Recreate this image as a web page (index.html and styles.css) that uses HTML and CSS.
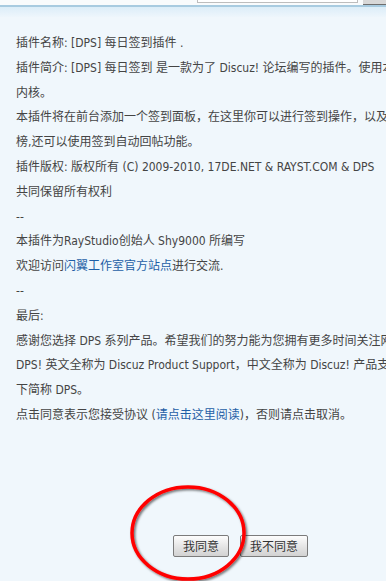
FILE: index.html
```html
<!DOCTYPE html>
<html>
<head>
    <title>插件安装协议</title>
    <link rel="stylesheet" href="styles.css">
</head>
<body>

<div class="topbar">
    <div class="searchbox"></div>
    <div class="topbtn"></div>
</div>
<div class="band"></div>

<div class="license">
    <div class="line">插件名称: [DPS] 每日签到插件 .</div>
    <div class="line">插件简介: [DPS] 每日签到 是一款为了 Discuz! 论坛编写的插件。使用本插件需要 Discuz! 7.2</div>
    <div class="line">内核。</div>
    <div class="line">本插件将在前台添加一个签到面板，在这里你可以进行签到操作，以及查看签到排行</div>
    <div class="line">榜,还可以使用签到自动回帖功能。</div>
    <div class="line">插件版权: 版权所有 (C) 2009-2010, 17DE.NET &amp; RAYST.COM &amp; DPS</div>
    <div class="line">共同保留所有权利</div>
    <div class="line">--</div>
    <div class="line">本插件为RayStudio创始人 Shy9000 所编写</div>
    <div class="line">欢迎访问<a href="#">闪翼工作室官方站点</a>进行交流.</div>
    <div class="line">--</div>
    <div class="line">最后:</div>
    <div class="line">感谢您选择 DPS 系列产品。希望我们的努力能为您拥有更多时间关注网站运营</div>
    <div class="line">DPS! 英文全称为 Discuz Product Support，中文全称为 Discuz! 产品支持，以</div>
    <div class="line">下简称 DPS。</div>
    <div class="line">点击同意表示您接受协议 (<a href="#">请点击这里阅读</a>)，否则请点击取消。</div>
</div>

<div class="actions">
    <button class="btn">我同意</button>
    <button class="btn">我不同意</button>
    <svg class="mark" width="130" height="106" viewBox="0 0 130 106">
        <defs>
            <filter id="shadow" x="-20%" y="-20%" width="140%" height="140%">
                <feDropShadow dx="1.5" dy="1.5" stdDeviation="1.2" flood-color="#000" flood-opacity="0.55"/>
            </filter>
        </defs>
        <ellipse cx="63" cy="52" rx="56" ry="46" fill="none" stroke="#f00" stroke-width="3.5" filter="url(#shadow)"/>
    </svg>
</div>

</body>
</html>
```

FILE: styles.css
```css
body {
    font-family: Tahoma, "DejaVu Sans Condensed", "Noto Sans CJK SC", sans-serif;
    font-size: 12px;
    background-color: #f0f7fc;
    color: #444;
    margin: 0;
    padding: 0;
    overflow: hidden;
    height: 581px;
}

.topbar {
    height: 5px;
    background-color: #f9fbfc;
    display: flex;
    align-items: flex-start;
    overflow: hidden;
}

.searchbox {
    margin-left: 197px;
    width: 159px;
    height: 2px;
    border: 1px solid #bdbdbd;
    border-top: none;
    background-color: #fff;
}

.topbtn {
    margin-left: 5px;
    flex-grow: 1;
    height: 4px;
    background-color: #d8d8d8;
    border-bottom: 1px solid #6e6e6e;
}

.band {
    height: 10px;
    border-top: 2px solid #a8cbe0;
    background: linear-gradient(#dcedf8, #eef6fc);
}

.license {
    padding: 14px 0 0 16px;
    line-height: 24.8px;
}

.line {
    white-space: nowrap;
}

.license a {
    color: #1f5fa6;
    text-decoration: none;
}

.actions {
    position: relative;
    display: flex;
    gap: 11px;
    padding: 107px 0 0 173px;
}

.btn {
    font-family: inherit;
    font-size: 12px;
    color: #333;
    height: 22px;
    padding: 0 9px;
    border: 1px solid #7b7b7b;
    border-radius: 2px;
    background: linear-gradient(#fdfdfd, #e4e4e4 55%, #d2d2d2);
}

.mark {
    position: absolute;
    left: 125px;
    top: 53px;
    pointer-events: none;
}
```
